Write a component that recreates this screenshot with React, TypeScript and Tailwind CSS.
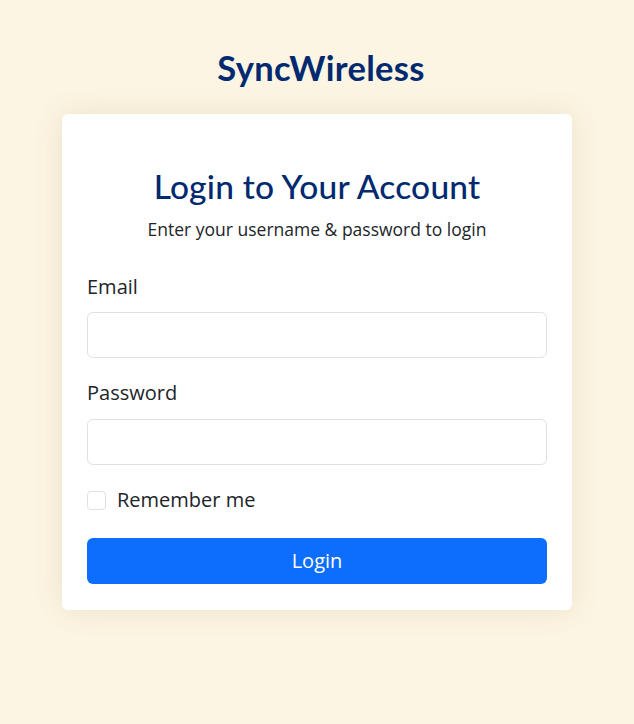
export default function App() {
  return (
    <div className="min-h-[724px] bg-[#fcf5e3] flex flex-col items-center pt-[47px] font-['Open_Sans',sans-serif]">
      <div className="h-[42px] pl-[8px] flex items-center font-['Lato',sans-serif] font-bold text-[34.5px] text-[#012970] tracking-[0.3px]">
        SyncWireless
      </div>
      <div className="mt-[25px] w-[510px] bg-white rounded-[6px] shadow-[0_0_30px_rgba(120,90,20,0.12)] px-[25px] pt-[52px] pb-[26px]">
        <h1 className="text-center font-['Lato',sans-serif] font-medium text-[33.5px] leading-[40px] tracking-[0.2px] text-[#012970]">
          Login to Your Account
        </h1>
        <p className="mt-[11px] text-center text-[17.5px] leading-[24px] text-[#212529]">
          Enter your username &amp; password to login
        </p>
        <form className="mt-[32px] flex flex-col">
          <label className="text-[20px] leading-[28px] text-[#212529]">Email</label>
          <input className="mt-[11px] h-[46px] rounded-[6px] border border-[#dee2e6] px-3 outline-none" type="email" />
          <label className="mt-[21px] text-[20px] leading-[28px] text-[#212529]">Password</label>
          <input className="mt-[12px] h-[46px] rounded-[6px] border border-[#dee2e6] px-3 outline-none" type="password" />
          <label className="mt-[25px] flex items-center gap-[11px] text-[20px] leading-[20px] text-[#212529]">
            <span className="w-[19px] h-[19px] rounded-[4px] border border-[#dee2e6] bg-white" />
            Remember me
          </label>
          <button type="button" className="mt-[28px] h-[46px] rounded-[6px] bg-[#0d6efd] text-white text-[20px]">
            Login
          </button>
        </form>
      </div>
    </div>
  );
}
